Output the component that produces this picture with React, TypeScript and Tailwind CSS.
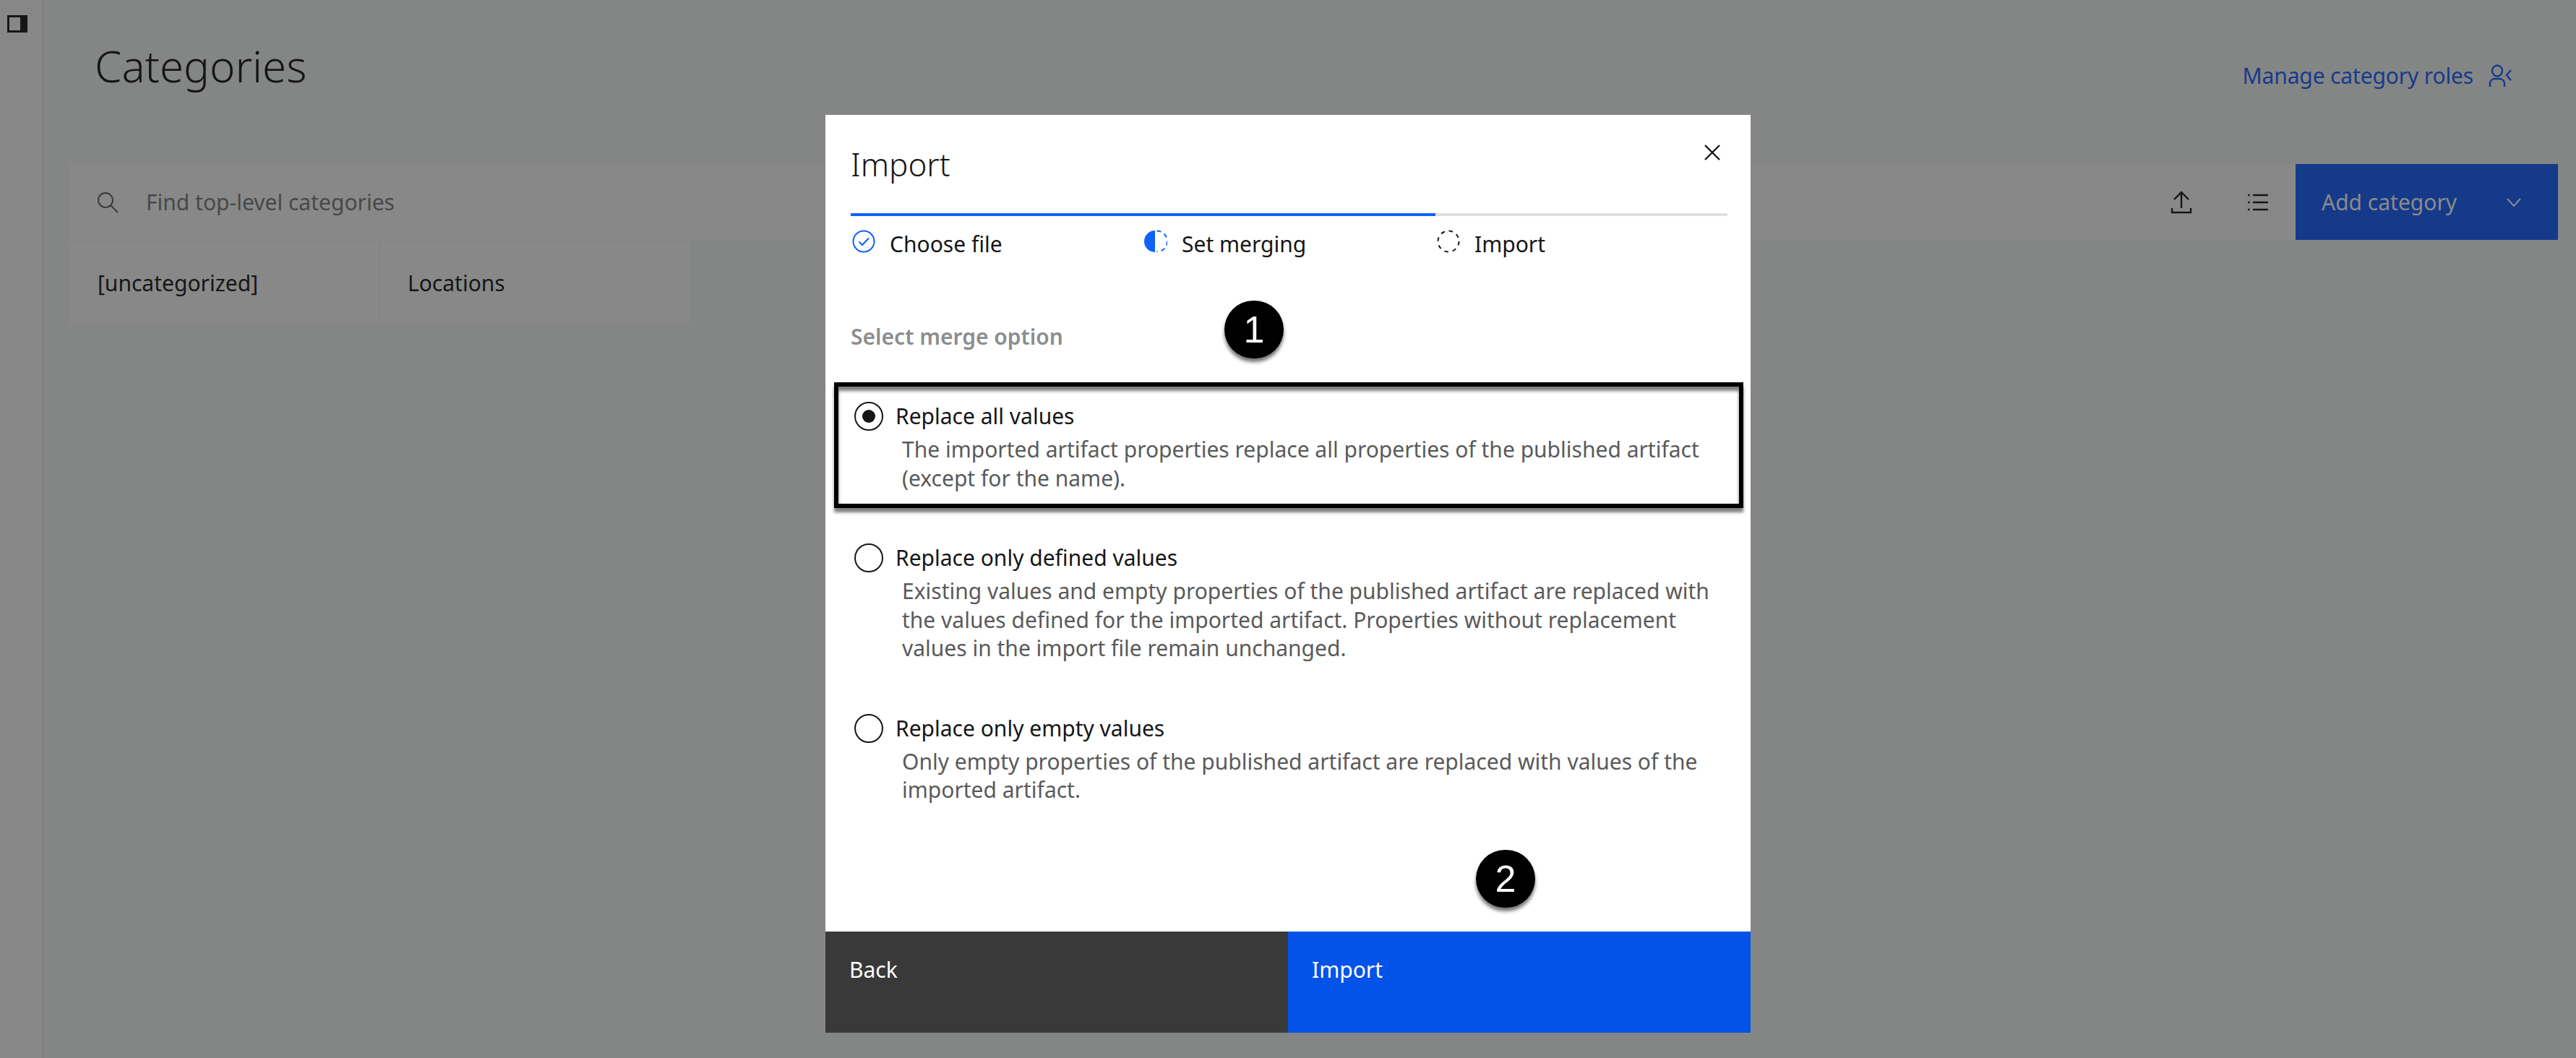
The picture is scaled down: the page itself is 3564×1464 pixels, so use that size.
import React from 'react';

const options = [
    {
        label: 'Replace all values',
        checked: true,
        lines: [
            'The imported artifact properties replace all properties of the published artifact',
            '(except for the name).',
        ],
    },
    {
        label: 'Replace only defined values',
        checked: false,
        lines: [
            'Existing values and empty properties of the published artifact are replaced with',
            'the values defined for the imported artifact. Properties without replacement',
            'values in the import file remain unchanged.',
        ],
    },
    {
        label: 'Replace only empty values',
        checked: false,
        lines: [
            'Only empty properties of the published artifact are replaced with values of the',
            'imported artifact.',
        ],
    },
];

const SidebarIcon = () => (
    <svg width="28" height="24" viewBox="0 0 28 24" className="block">
        <rect x="1.5" y="1.5" width="25" height="21" fill="none" stroke="#161616" strokeWidth="3" />
        <rect x="18" y="1" width="9" height="22" fill="#161616" />
    </svg>
);

const SearchIcon = () => (
    <svg width="32" height="32" viewBox="0 0 32 32" fill="none" stroke="#3b3b3b" strokeWidth="2" className="block">
        <circle cx="13" cy="13" r="10" />
        <path d="M20.5 20.5 L30 30" />
    </svg>
);

const UploadIcon = () => (
    <svg width="30" height="32" viewBox="0 0 30 32" fill="none" stroke="#161616" strokeWidth="2.4" className="block">
        <path d="M15 24 V2 M5 12 L15 2 L25 12" />
        <path d="M2 24 V30 H28 V24" />
    </svg>
);

const ListIcon = () => (
    <svg width="28" height="24" viewBox="0 0 28 24" fill="none" stroke="#161616" strokeWidth="2.4" className="block">
        <path d="M7 2 H28 M7 12 H28 M7 22 H28" />
        <path d="M0 2 H2.5 M0 12 H2.5 M0 22 H2.5" />
    </svg>
);

const UserRoleIcon = () => (
    <svg width="32" height="32" viewBox="0 0 32 32" fill="none" stroke="#173a8c" strokeWidth="2.4" className="block">
        <ellipse cx="12" cy="9" rx="7" ry="7.5" />
        <path d="M2 31 V26 A7 7 0 0 1 9 20 H15 A7 7 0 0 1 22 26 V31" />
        <path d="M31 8 L25 15 L31 22" />
    </svg>
);

const ChevronIcon = () => (
    <svg width="20" height="12" viewBox="0 0 20 12" fill="none" stroke="#8a8a8a" strokeWidth="2" className="block">
        <path d="M1 1 L10 11 L19 1" />
    </svg>
);

const CloseIcon = () => (
    <svg width="24" height="24" viewBox="0 0 24 24" fill="none" stroke="#161616" strokeWidth="2.4" className="block">
        <path d="M2 2 L22 22 M22 2 L2 22" />
    </svg>
);

const CheckCircleIcon = () => (
    <svg width="32" height="32" viewBox="0 0 32 32" fill="none" stroke="#0f62fe" strokeWidth="2" className="block">
        <circle cx="16" cy="16" r="14.5" />
        <path d="M9.5 16.5 L14 21 L23 11.5" />
    </svg>
);

const HalfCircleIcon = () => (
    <svg width="32" height="32" viewBox="0 0 32 32" className="block">
        <path d="M15 1 A15 15 0 0 0 15 31 Z" fill="#0f62fe" />
        <path d="M17.5 1.5 A14.5 14.5 0 0 1 17.5 30.5" fill="none" stroke="#0f62fe" strokeWidth="2" strokeDasharray="6 5" />
    </svg>
);

const DashedCircleIcon = () => (
    <svg width="32" height="32" viewBox="0 0 32 32" fill="none" stroke="#161616" strokeWidth="2" className="block">
        <circle cx="16" cy="16" r="14.5" strokeDasharray="5.5 5.9" />
    </svg>
);

const Step = ({ icon, label }: { icon: React.ReactNode; label: string }) => (
    <div className="flex items-start gap-5 pl-[2px]">
        {icon}
        <span className="text-[30px] leading-[40px]">{label}</span>
    </div>
);

const Badge = ({ value, className }: { value: string; className: string }) => (
    <div
        className={`absolute w-[82px] h-[80px] rounded-full bg-black text-white flex items-center justify-center text-[52px] font-['Liberation_Sans',sans-serif] shadow-[0_5px_5px_rgba(0,0,0,0.55)] ${className}`}
    >
        {value}
    </div>
);

export default function App() {
    return (
        <div className="relative h-[1464px] w-full overflow-hidden bg-[#848685] font-['Noto_Sans',sans-serif] text-[#161616]">
            <div className="flex h-full">
                <div className="w-[61px] shrink-0 border-r-2 border-[#7b7d7c] bg-[#868786] pt-[21px] pl-[10px]">
                    <SidebarIcon />
                </div>
                <main className="flex-1 pl-[35px] pr-[25px]">
                    <div className="flex h-[227px] justify-between pl-[35px] pr-[64px]">
                        <h1 className="pt-[55px] text-[60px] leading-[72px] font-light text-[#161616]">Categories</h1>
                        <a className="flex h-fit items-center gap-[21px] pt-[87px] text-[30px] leading-[36px] tracking-[-0.15px] text-[#173a8c]">
                            Manage category roles
                            <UserRoleIcon />
                        </a>
                    </div>
                    <div className="flex h-[105px] items-center bg-[#888888]">
                        <div className="flex flex-1 items-center gap-[37px] pl-[37px]">
                            <SearchIcon />
                            <span className="text-[30px] text-[#484848]">Find top-level categories</span>
                        </div>
                        <div className="mr-[77px]">
                            <UploadIcon />
                        </div>
                        <div className="mr-[38px]">
                            <ListIcon />
                        </div>
                        <div className="flex h-full w-[363px] items-center justify-between bg-[#153a8a] pl-[36px] pr-[51px] text-[30px] text-[#8a8a8a]">
                            Add category
                            <ChevronIcon />
                        </div>
                    </div>
                    <div className="mt-[2px] flex h-[114px] w-fit bg-[#888888] text-[30px]">
                        <div className="flex w-[429px] items-center border-r border-[#808080] pl-[39px]">[uncategorized]</div>
                        <div className="flex w-[430px] items-center pl-[39px]">Locations</div>
                    </div>
                </main>
            </div>

            <div className="absolute inset-0 flex justify-center pt-[159px]">
                <div className="relative flex h-[1270px] w-[1280px] flex-col bg-white">
                    <div className="flex-1 pl-[35px] pr-[32px]">
                        <div className="flex h-[92px] justify-between pt-[40px]">
                            <h2 className="pt-[2px] text-[44px] leading-[52px] font-light">Import</h2>
                            <div className="mr-[9px]">
                                <CloseIcon />
                            </div>
                        </div>
                        <div className="mt-[44px] flex h-[4px] bg-[#e0e0e0]">
                            <div className="w-[809px] bg-[#0f62fe]" />
                        </div>
                        <div className="grid grid-cols-[404px_405px_1fr] pt-[19px]">
                            <Step icon={<CheckCircleIcon />} label="Choose file" />
                            <Step icon={<HalfCircleIcon />} label="Set merging" />
                            <Step icon={<DashedCircleIcon />} label="Import" />
                        </div>
                        <h3 className="pt-[88px] text-[30px] leading-[40px] font-semibold text-[#8d8d8d]">Select merge option</h3>
                        <div className="flex flex-col gap-[71px] pt-[70px]">
                            {options.map((option) => (
                                <div key={option.label}>
                                    <div className="flex items-center gap-[17px] pl-[5px]">
                                        <div className="flex size-[40px] items-center justify-center rounded-full border-2 border-[#161616]">
                                            {option.checked && <div className="size-[18px] rounded-full bg-[#161616]" />}
                                        </div>
                                        <span className="text-[30px] leading-[40px]">{option.label}</span>
                                    </div>
                                    <p className="mt-[6px] pl-[71px] text-[30px] leading-[39.5px] whitespace-nowrap text-[#5a5a5a]">
                                        {option.lines.map((line) => (
                                            <span key={line} className="block">
                                                {line}
                                            </span>
                                        ))}
                                    </p>
                                </div>
                            ))}
                        </div>
                    </div>
                    <div className="grid h-[140px] grid-cols-2 text-[30px] leading-[36px] text-white">
                        <div className="bg-[#393939] pl-[33px] pt-[35px]">Back</div>
                        <div className="bg-[#0353e9] pl-[33px] pt-[35px]">Import</div>
                    </div>

                    {/* Annotations drawn on top of the screenshot */}
                    <div className="absolute left-[12px] top-[370px] h-[174px] w-[1258px] border-[6px] border-black shadow-[0_6px_4px_rgba(0,0,0,0.5),inset_0_6px_4px_rgba(0,0,0,0.5)]" />
                    <Badge value="1" className="left-[552px] top-[257px]" />
                    <Badge value="2" className="left-[900px] top-[1017px]" />
                </div>
            </div>
        </div>
    );
}
